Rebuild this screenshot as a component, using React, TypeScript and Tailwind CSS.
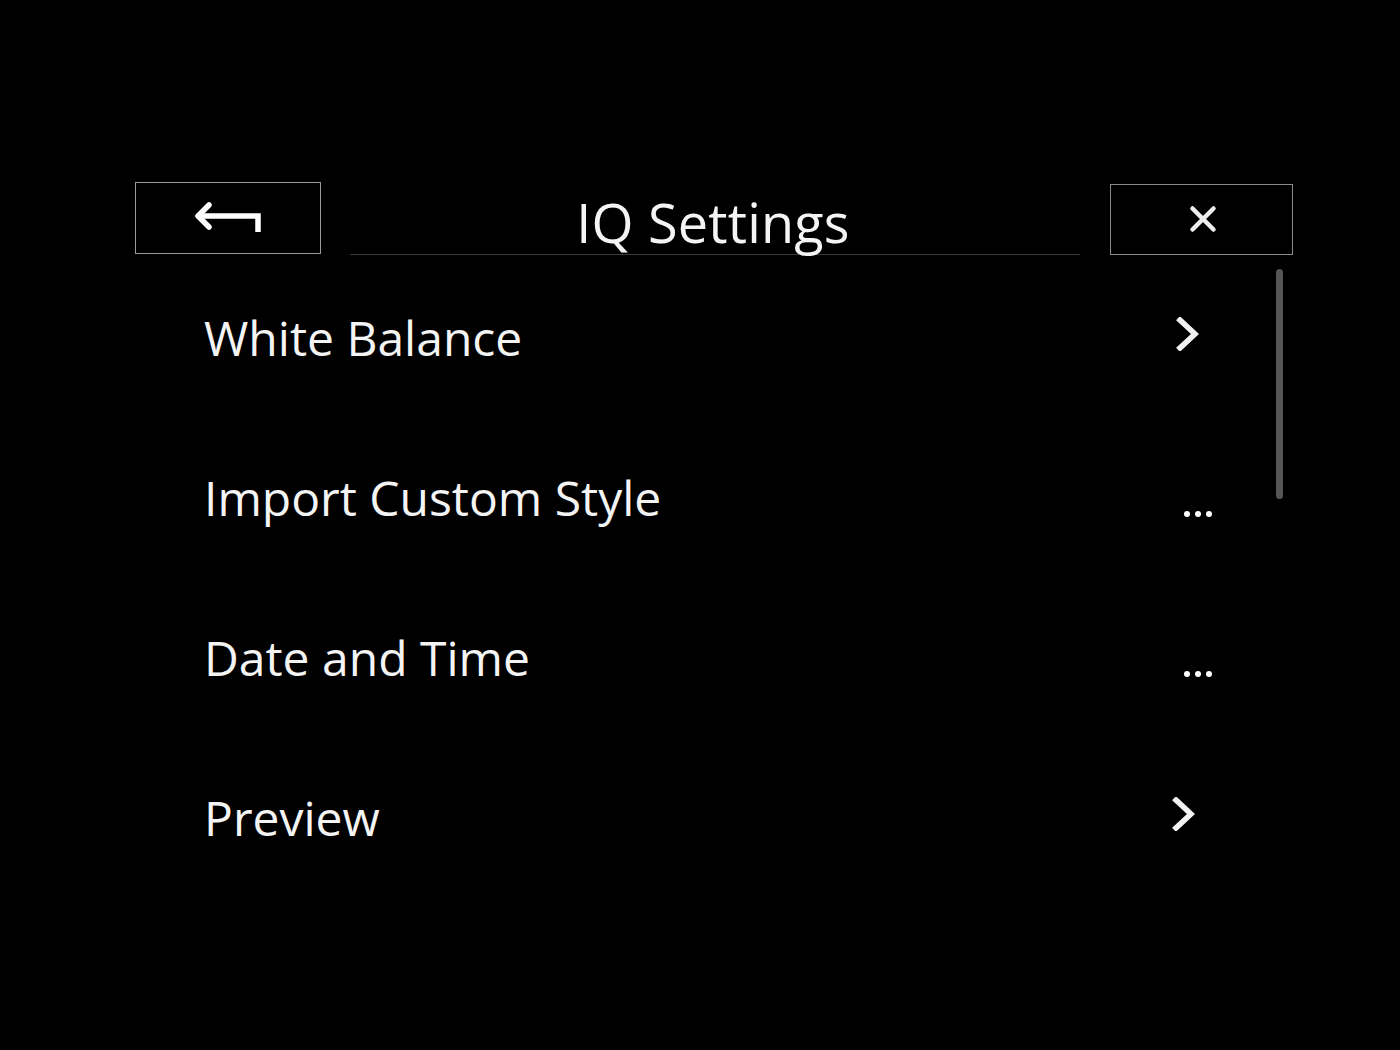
import React from 'react';

type Row = {
  label: string;
  kind: 'chevron' | 'more';
  nudge: string;
};

const rows: Row[] = [
  { label: 'White Balance', kind: 'chevron', nudge: 'mr-[18px]' },
  { label: 'Import Custom Style', kind: 'more', nudge: 'mr-[8px]' },
  { label: 'Date and Time', kind: 'more', nudge: 'mr-[8px]' },
  { label: 'Preview', kind: 'chevron', nudge: 'mr-[22px]' },
];

function BackIcon() {
  return (
    <svg width="68" height="32" viewBox="0 0 68 32" fill="none">
      <path d="M64 31V15H4" stroke="white" strokeWidth="5.5" strokeLinejoin="miter" />
      <path d="M15 4L4 15L15 26" stroke="white" strokeWidth="5.5" strokeLinecap="round" strokeLinejoin="round" />
    </svg>
  );
}

function CloseIcon() {
  return (
    <svg width="28" height="28" viewBox="0 0 28 28" fill="none">
      <path d="M3.5 3.5L24.5 24.5M24.5 3.5L3.5 24.5" stroke="#eeeeee" strokeWidth="4.5" strokeLinecap="round" />
    </svg>
  );
}

function Chevron() {
  return (
    <svg width="26" height="34" viewBox="0 0 26 34" fill="none">
      <path d="M4 3L19 17L4 31" stroke="#f2f2f2" strokeWidth="5.5" strokeLinecap="square" />
    </svg>
  );
}

function MoreDots() {
  return (
    <div className="flex items-center gap-[5px]">
      <span className="w-[6px] h-[6px] rounded-full bg-white" />
      <span className="w-[6px] h-[6px] rounded-full bg-white" />
      <span className="w-[6px] h-[6px] rounded-full bg-white" />
    </div>
  );
}

export default function App() {
  return (
    <div
      className="w-[1400px] h-[1050px] bg-black text-[#f4f4f4] overflow-hidden"
      style={{ fontFamily: '"Open Sans", "Noto Sans", sans-serif' }}
    >
      {/* Header */}
      <div className="flex items-end pt-[182px] pl-[135px]">
        <button className="w-[186px] h-[72px] border border-[#9a9a9a] flex items-center justify-center self-start">
          <span className="mt-[-2px]">
            <BackIcon />
          </span>
        </button>
        <div className="ml-[29px] w-[730px] h-[73px] border-b border-[#3a3a3a] flex items-end justify-center">
          <span className="text-[54px] leading-none tracking-[0.2px] mb-[5px] ml-[-4px]">IQ Settings</span>
        </div>
        <button className="ml-[30px] w-[183px] h-[71px] border border-[#8a8a8a] flex items-center justify-center self-start mt-[2px]">
          <span className="mt-[-2px] ml-[2px]">
            <CloseIcon />
          </span>
        </button>
      </div>

      {/* List + scrollbar */}
      <div className="flex mt-[3px]">
        <div className="flex flex-col pl-[204px] w-[1220px]">
          {rows.map((row) => (
            <div key={row.label} className="h-[160px] flex items-center justify-between">
              <span className="text-[48px] leading-none">{row.label}</span>
              {row.kind === 'chevron' ? (
                <span className={`${row.nudge} mt-[-8px]`}>
                  <Chevron />
                </span>
              ) : (
                <span className={`${row.nudge} mt-[32px]`}>
                  <MoreDots />
                </span>
              )}
            </div>
          ))}
        </div>
        <div className="ml-[56px] mt-[11px] w-[7px] h-[230px] rounded-full bg-[#555555]" />
      </div>
    </div>
  );
}
